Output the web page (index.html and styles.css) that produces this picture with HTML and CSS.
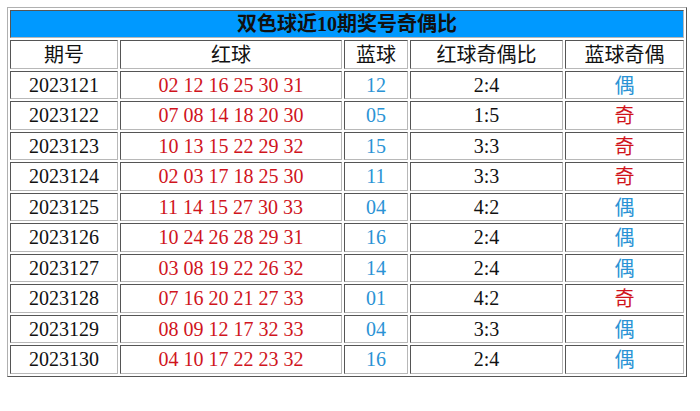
FILE: index.html
```html
<!DOCTYPE html>
<html lang="zh-CN">
<head>
<meta charset="utf-8">
<link rel="stylesheet" href="styles.css">
</head>
<body>
<table class="tbl">
  <tr><td class="title" colspan="5">双色球近10期奖号奇偶比</td></tr>
  <tr class="head">
    <td class="c1">期号</td><td class="c2">红球</td><td class="c3">蓝球</td><td class="c4">红球奇偶比</td><td class="c5">蓝球奇偶</td>
  </tr>
  <tr><td>2023121</td><td class="red">02 12 16 25 30 31</td><td class="blue">12</td><td>2:4</td><td class="blue cjk">偶</td></tr>
  <tr><td>2023122</td><td class="red">07 08 14 18 20 30</td><td class="blue">05</td><td>1:5</td><td class="red cjk">奇</td></tr>
  <tr><td>2023123</td><td class="red">10 13 15 22 29 32</td><td class="blue">15</td><td>3:3</td><td class="red cjk">奇</td></tr>
  <tr><td>2023124</td><td class="red">02 03 17 18 25 30</td><td class="blue">11</td><td>3:3</td><td class="red cjk">奇</td></tr>
  <tr><td>2023125</td><td class="red">11 14 15 27 30 33</td><td class="blue">04</td><td>4:2</td><td class="blue cjk">偶</td></tr>
  <tr><td>2023126</td><td class="red">10 24 26 28 29 31</td><td class="blue">16</td><td>2:4</td><td class="blue cjk">偶</td></tr>
  <tr><td>2023127</td><td class="red">03 08 19 22 26 32</td><td class="blue">14</td><td>2:4</td><td class="blue cjk">偶</td></tr>
  <tr><td>2023128</td><td class="red">07 16 20 21 27 33</td><td class="blue">01</td><td>4:2</td><td class="red cjk">奇</td></tr>
  <tr><td>2023129</td><td class="red">08 09 12 17 32 33</td><td class="blue">04</td><td>3:3</td><td class="blue cjk">偶</td></tr>
  <tr><td>2023130</td><td class="red">04 10 17 22 23 32</td><td class="blue">16</td><td>2:4</td><td class="blue cjk">偶</td></tr>
</table>
</body>
</html>
```
FILE: styles.css
```css
html, body {
  background: #ffffff;
}
body {
  margin: 7px;
  font-family: "Liberation Serif", "Noto Sans CJK SC", serif;
  font-size: 20px;
  color: #111111;
}
.tbl {
  border-collapse: separate;
  border-spacing: 2px;
  border: 1px solid;
  border-color: #b0b0b0 #555555 #555555 #b0b0b0;
  width: 680px;
}
.tbl td {
  border: 1px solid;
  border-color: #555555 #b8b8b8 #b8b8b8 #555555;
  padding: 0;
  height: 26.5px;
  box-sizing: border-box;
  text-align: center;
  vertical-align: middle;
  line-height: 24px;
  white-space: nowrap;
}
.tbl tr:not(:first-child) td {
  height: 28.5px;
}
.tbl td.title {
  background: #0099ff;
  font-weight: bold;
  height: 28px;
  color: #111111;
}
.head td {
  font-family: "Noto Sans CJK SC", sans-serif;
  font-size: 20px;
}
.c1 { width: 108px; }
.c2 { width: 222px; }
.c3 { width: 64px; }
.c4 { width: 153px; }
.c5 { width: 119px; }
.red { color: #d0141c; }
.blue { color: #2a93d5; }
.cjk {
  font-family: "Noto Sans CJK SC", sans-serif;
}
```
